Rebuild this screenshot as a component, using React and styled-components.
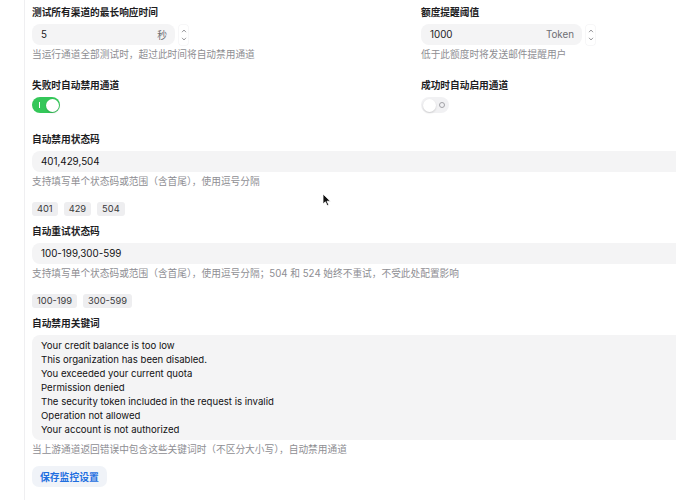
import React from 'react';
import styled, { createGlobalStyle } from 'styled-components';

const GlobalStyle = createGlobalStyle`
  html, body {
    margin: 0;
    padding: 0;
    background: #ffffff;
  }
  body {
    font-family: Inter, "Noto Sans CJK SC", sans-serif;
    color: #1d1d1f;
    -webkit-font-smoothing: antialiased;
  }
`;

const KEYWORDS = [
  'Your credit balance is too low',
  'This organization has been disabled.',
  'You exceeded your current quota',
  'Permission denied',
  'The security token included in the request is invalid',
  'Operation not allowed',
  'Your account is not authorized',
];

function Spinner() {
  return (
    <SpinBox>
      <svg width="6" height="4" viewBox="0 0 6 4">
        <path d="M1 3.2 L3 1 L5 3.2" fill="none" stroke="#8e8e93" strokeWidth="0.9" />
      </svg>
      <svg width="6" height="4" viewBox="0 0 6 4">
        <path d="M1 0.8 L3 3 L5 0.8" fill="none" stroke="#8e8e93" strokeWidth="0.9" />
      </svg>
    </SpinBox>
  );
}

function NumberField({ value, unit, width }) {
  return (
    <NumberRow>
      <InputBox $width={width}>
        <span>{value}</span>
        <Unit>{unit}</Unit>
      </InputBox>
      <Spinner />
    </NumberRow>
  );
}

function Toggle({ on }) {
  return (
    <Track $on={on}>
      {on ? <OnMark /> : <OffMark />}
      <Knob $on={on} />
    </Track>
  );
}

function Cursor() {
  return (
    <CursorWrap>
      <svg width="10" height="14" viewBox="0 0 10 14">
        <path
          d="M1 1 L1 11 L3.4 8.8 L5.2 12.6 L6.8 11.9 L5 8.2 L8.4 8.2 Z"
          fill="#111"
          stroke="#fff"
          strokeWidth="0.8"
          strokeLinejoin="round"
        />
      </svg>
    </CursorWrap>
  );
}

export default function App() {
  return (
    <>
      <GlobalStyle />
      <Page>
        <Sidebar />
        <Main>
          <TwoCols>
            <Field>
              <Label>测试所有渠道的最长响应时间</Label>
              <NumberField value="5" unit="秒" width={143} />
              <Help>当运行通道全部测试时，超过此时间将自动禁用通道</Help>
            </Field>
            <Field>
              <Label>额度提醒阈值</Label>
              <NumberField value="1000" unit="Token" width={161} />
              <Help>低于此额度时将发送邮件提醒用户</Help>
            </Field>
            <Field>
              <Label>失败时自动禁用通道</Label>
              <Toggle on />
            </Field>
            <Field>
              <Label>成功时自动启用通道</Label>
              <Toggle on={false} />
            </Field>
          </TwoCols>

          <Block $top={21}>
            <Label>自动禁用状态码</Label>
            <WideInput>401,429,504</WideInput>
            <Help>支持填写单个状态码或范围（含首尾），使用逗号分隔</Help>
            <Tags>
              <Tag>401</Tag>
              <Tag>429</Tag>
              <Tag>504</Tag>
            </Tags>
          </Block>

          <Block $top={10}>
            <Label>自动重试状态码</Label>
            <WideInput>100-199,300-599</WideInput>
            <Help>支持填写单个状态码或范围（含首尾），使用逗号分隔；504 和 524 始终不重试，不受此处配置影响</Help>
            <Tags>
              <Tag>100-199</Tag>
              <Tag>300-599</Tag>
            </Tags>
          </Block>

          <Block $top={10}>
            <Label>自动禁用关键词</Label>
            <TextArea>
              {KEYWORDS.map((k) => (
                <div key={k}>{k}</div>
              ))}
            </TextArea>
            <Help>当上游通道返回错误中包含这些关键词时（不区分大小写），自动禁用通道</Help>
            <SaveButton>保存监控设置</SaveButton>
          </Block>
        </Main>
        <Cursor />
      </Page>
    </>
  );
}

const Page = styled.div`
  position: relative;
  display: flex;
  width: 676px;
  height: 500px;
  overflow: hidden;
`;

const Sidebar = styled.div`
  width: 24px;
  flex-shrink: 0;
  border-right: 1px solid #efeff1;
`;

const Main = styled.div`
  flex: 1;
  min-width: 0;
  padding: 7px 0 0 7px;
`;

const TwoCols = styled.div`
  display: grid;
  grid-template-columns: 389px 1fr;
  row-gap: 19px;
`;

const Field = styled.div`
  display: flex;
  flex-direction: column;
  align-items: flex-start;
`;

const Block = styled.div`
  margin-top: ${(p) => p.$top}px;
  display: flex;
  flex-direction: column;
  align-items: stretch;
`;

const Label = styled.div`
  font-size: 9.7px;
  line-height: 12px;
  font-weight: 600;
  color: #1d1d1f;
  margin-bottom: 5px;
`;

const Help = styled.div`
  font-size: 9.7px;
  line-height: 12px;
  color: #8e8e93;
  margin-top: 4px;
`;

const NumberRow = styled.div`
  display: flex;
  align-items: center;
  gap: 4px;
`;

const InputBox = styled.div`
  box-sizing: border-box;
  width: ${(p) => p.$width}px;
  height: 21px;
  padding: 0 8px 0 9px;
  border-radius: 8px;
  background: #f4f4f5;
  display: flex;
  align-items: center;
  justify-content: space-between;
  font-size: 9.8px;
  color: #1d1d1f;
`;

const Unit = styled.span`
  font-size: 9.8px;
  color: #6e6e73;
`;

const SpinBox = styled.div`
  box-sizing: border-box;
  width: 9px;
  height: 20px;
  display: flex;
  flex-direction: column;
  align-items: center;
  justify-content: center;
  gap: 4px;
  border-radius: 2px;
  box-shadow: 0 0 0 0.5px #f0f0f2;
`;

const Track = styled.div`
  position: relative;
  box-sizing: border-box;
  width: 28px;
  height: 16px;
  border-radius: 8px;
  background: ${(p) => (p.$on ? '#34c759' : '#f1f1f3')};
`;

const Knob = styled.div`
  position: absolute;
  top: 1.5px;
  left: ${(p) => (p.$on ? '13.5px' : '1.5px')};
  width: 13px;
  height: 13px;
  border-radius: 50%;
  background: #ffffff;
  box-shadow: 0 1px 2px rgba(0, 0, 0, 0.16);
`;

const OnMark = styled.div`
  position: absolute;
  left: 6.5px;
  top: 5px;
  width: 1px;
  height: 6px;
  background: #ffffff;
`;

const OffMark = styled.div`
  position: absolute;
  right: 4px;
  top: 5px;
  box-sizing: border-box;
  width: 6px;
  height: 6px;
  border-radius: 50%;
  border: 1px solid #a1a1a6;
`;

const WideInput = styled.div`
  box-sizing: border-box;
  height: 21px;
  padding: 0 9px;
  border-radius: 8px 0 0 8px;
  background: #f4f4f5;
  display: flex;
  align-items: center;
  font-size: 9.8px;
  color: #111113;
`;

const Tags = styled.div`
  display: flex;
  gap: 6px;
  margin-top: 14px;
`;

const Tag = styled.div`
  height: 14px;
  padding: 0 5px;
  border-radius: 3px;
  background: #eeeef0;
  font-size: 9.3px;
  line-height: 14px;
  color: #3a3a3c;
`;

const TextArea = styled.div`
  box-sizing: border-box;
  height: 105px;
  padding: 4px 9px 3px;
  border-radius: 8px 0 0 8px;
  background: #f4f4f5;
  font-size: 9.6px;
  line-height: 14px;
  color: #111113;
`;

const SaveButton = styled.button`
  align-self: flex-start;
  margin-top: 10px;
  height: 21px;
  padding: 0 8px;
  border: none;
  border-radius: 7px;
  background: #f0f3f8;
  font-family: Inter, "Noto Sans CJK SC", sans-serif;
  font-size: 9.8px;
  font-weight: 600;
  color: #1f6fe0;
`;

const CursorWrap = styled.div`
  position: absolute;
  left: 322px;
  top: 191px;
  width: 10px;
  height: 14px;
`;
